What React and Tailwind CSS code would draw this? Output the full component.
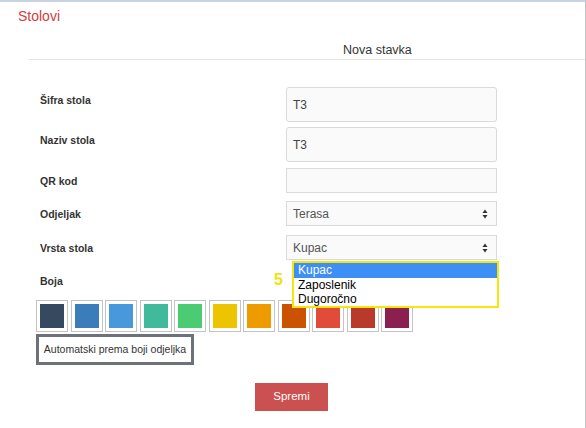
const swatches = ['#354a60', '#3a7dba', '#4899dc', '#41b99b', '#4bcc72', '#ecc400', '#ee9b00', '#cb5200', '#e14b3a', '#b9392a', '#8b2050'];

const labelClass = 'w-[286px] shrink-0 pl-[40px] pt-[6px] text-[10.5px] leading-[14px] font-bold text-[#333]';
const inputClass = 'w-[211px] bg-[#fafafa] border border-[#dadada] text-[12px] text-[#444] pl-[6px] flex items-center';

function SelectArrows() {
  return (
    <svg width="6" height="10" viewBox="0 0 6 10" className="ml-auto mr-[8px]">
      <path d="M3 0.5 L5.5 4 L0.5 4 Z" fill="#333" />
      <path d="M0.5 6 L5.5 6 L3 9.5 Z" fill="#333" />
    </svg>
  );
}

function Row({ label, children, className = '' }) {
  return (
    <div className={`flex ${className}`}>
      <div className={labelClass}>{label}</div>
      {children}
    </div>
  );
}

export default function App() {
  return (
    <div className="relative w-[586px] h-[428px] bg-white border-t-2 border-t-[#c9d3e3] border-r border-r-[#c4c4c4] overflow-hidden font-['Liberation_Sans',Arial,sans-serif]">
      <div className="pl-[18px] pt-[6px] text-[14px] leading-[16px] text-[#d13d3d]">Stolovi</div>

      <div className="ml-[29px] mt-[19px] pb-[1px] border-b border-[#e6e6e6]">
        <div className="pl-[314px] text-[12.5px] leading-[15px] text-[#333]">Nova stavka</div>
      </div>

      <div className="pt-[27px]">
        <Row label="Šifra stola" className="h-[35px]">
          <div className={`${inputClass} h-[35px] rounded-[3px]`}>T3</div>
        </Row>
        <Row label="Naziv stola" className="h-[35px] mt-[5px]">
          <div className={`${inputClass} h-[35px] rounded-[3px]`}>T3</div>
        </Row>
        <Row label="QR kod" className="h-[25px] mt-[6px]">
          <div className={`${inputClass} h-[25px]`}></div>
        </Row>
        <Row label="Odjeljak" className="h-[25px] mt-[8px]">
          <div className={`${inputClass} h-[25px] text-[#555]`}>
            Terasa
            <SelectArrows />
          </div>
        </Row>
        <Row label="Vrsta stola" className="h-[25px] mt-[9px]">
          <div className={`${inputClass} h-[25px] text-[#555]`}>
            Kupac
            <SelectArrows />
          </div>
        </Row>

        <div className="mt-[14px] pl-[40px] text-[10.5px] leading-[14px] font-bold text-[#333]">Boja</div>

        <div className="mt-[12px] ml-[36px] flex gap-[2.5px]">
          {swatches.map(c => (
            <div key={c} className="w-[32px] h-[32px] border border-[#c4c4c4] p-[3px] bg-white">
              <div className="w-full h-full" style={{ backgroundColor: c }} />
            </div>
          ))}
        </div>

        <div className="mt-[2px] ml-[36px] w-[158px] h-[31px] border-[3px] border-[#6d7178] flex items-center justify-center text-[10.5px] text-[#333] bg-white">
          Automatski prema boji odjeljka
        </div>

        <div className="mt-[18px] ml-[255px] w-[73px] h-[28px] bg-[#cb5050] flex items-center justify-center text-[11.5px] text-white">
          Spremi
        </div>
      </div>

      <div className="absolute left-[274px] top-[269px] text-[16px] leading-[18px] font-bold text-[#f2e20c]">5</div>

      <div className="absolute left-[292px] top-[259px] w-[207px] h-[47px] border-2 border-[#f5e60b] bg-white text-[12px] leading-[14.5px] text-black">
        <div className="bg-[#3d8ef5] text-white pl-[4px]">Kupac</div>
        <div className="pl-[4px]">Zaposlenik</div>
        <div className="pl-[4px]">Dugoročno</div>
      </div>
    </div>
  );
}
